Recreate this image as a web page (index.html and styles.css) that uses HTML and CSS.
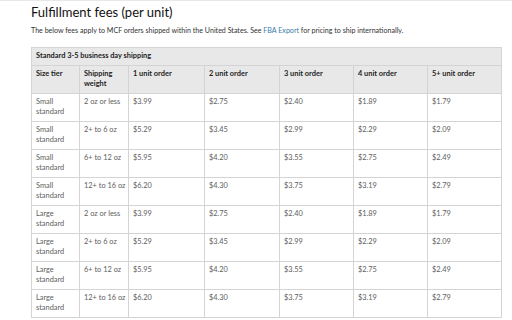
FILE: index.html
```html
<!DOCTYPE html>
<html>
<head>
<meta charset="utf-8">
<link rel="stylesheet" href="styles.css">
</head>
<body>
<div class="page">
  <h1 class="title">Fulfillment fees (per unit)</h1>
  <p class="intro">The below fees apply to MCF orders shipped within the United States. See <a class="link" href="#">FBA Export</a> for pricing to ship internationally.</p>
  <table class="fees">
    <colgroup>
      <col class="c-tier"><col class="c-weight"><col class="c-1"><col class="c-2"><col class="c-3"><col class="c-4"><col class="c-5">
    </colgroup>
    <thead>
      <tr class="group"><th colspan="7">Standard 3-5 business day shipping</th></tr>
      <tr class="heads"><th>Size tier</th><th>Shipping weight</th><th>1 unit order</th><th>2 unit order</th><th>3 unit order</th><th>4 unit order</th><th>5+ unit order</th></tr>
    </thead>
    <tbody>
      <tr><td>Small standard</td><td>2 oz or less</td><td>$3.99</td><td>$2.75</td><td>$2.40</td><td>$1.89</td><td>$1.79</td></tr>
      <tr><td>Small standard</td><td>2+ to 6 oz</td><td>$5.29</td><td>$3.45</td><td>$2.99</td><td>$2.29</td><td>$2.09</td></tr>
      <tr><td>Small standard</td><td>6+ to 12 oz</td><td>$5.95</td><td>$4.20</td><td>$3.55</td><td>$2.75</td><td>$2.49</td></tr>
      <tr><td>Small standard</td><td>12+ to 16 oz</td><td>$6.20</td><td>$4.30</td><td>$3.75</td><td>$3.19</td><td>$2.79</td></tr>
      <tr><td>Large standard</td><td>2 oz or less</td><td>$3.99</td><td>$2.75</td><td>$2.40</td><td>$1.89</td><td>$1.79</td></tr>
      <tr><td>Large standard</td><td>2+ to 6 oz</td><td>$5.29</td><td>$3.45</td><td>$2.99</td><td>$2.29</td><td>$2.09</td></tr>
      <tr><td>Large standard</td><td>6+ to 12 oz</td><td>$5.95</td><td>$4.20</td><td>$3.55</td><td>$2.75</td><td>$2.49</td></tr>
      <tr><td>Large standard</td><td>12+ to 16 oz</td><td>$6.20</td><td>$4.30</td><td>$3.75</td><td>$3.19</td><td>$2.79</td></tr>
    </tbody>
  </table>
</div>
</body>
</html>
```
FILE: styles.css
```css
html, body {
  margin: 0;
  padding: 0;
  background: #fff;
}
body {
  font-family: "Lato", "Open Sans", sans-serif;
  color: #444;
  border-top: 1px solid #e8e8e8;
  height: 319px;
  overflow: hidden;
}
.page {
  padding: 3px 0 0 31px;
}
.title {
  margin: 0;
  font-size: 13px;
  line-height: 16px;
  font-weight: 400;
  color: #111;
}
.intro {
  margin: 5px 0 0;
  font-size: 7.1px;
  line-height: 12px;
  color: #333;
}
.link {
  color: #3a7ba8;
  text-decoration: none;
}
.fees {
  margin-top: 10px;
  border-collapse: collapse;
  width: 470px;
  table-layout: fixed;
  font-size: 7.4px;
  line-height: 10px;
}
.c-tier { width: 48px; }
.c-weight { width: 49px; }
.c-1 { width: 76px; }
.c-2 { width: 75px; }
.c-3 { width: 74px; }
.c-4 { width: 74px; }
.c-5 { width: 74px; }
.fees th, .fees td {
  border: 1px solid #d4d4d4;
  padding: 3px 1px 4px 4px;
  text-align: left;
  vertical-align: top;
}
.fees th {
  background: #e8e8e8;
  font-weight: 700;
  font-size: 7.4px;
  color: #222;
}
.fees td {
  color: #5e5e5e;
}
```
